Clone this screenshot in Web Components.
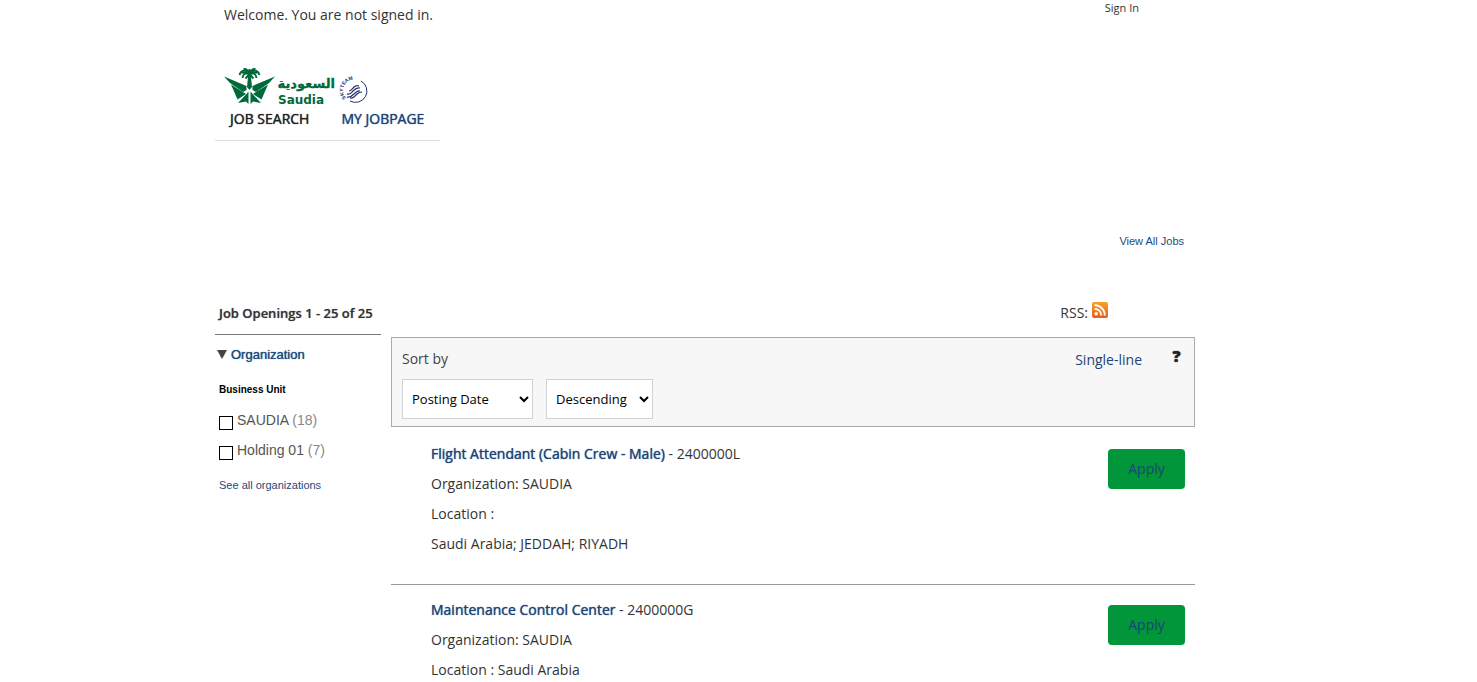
<!DOCTYPE html>
<html lang="en">
<head>
<meta charset="utf-8">
<title>Job Search</title>
<style>
body { margin: 0; background: #fff; color: #333; font: 14px/30px "Open Sans", sans-serif; overflow-x: hidden; }
</style>
</head>
<body>
<careers-page></careers-page>

<template id="t-page">
<style>
:host { display: block; padding: 0 67px 0 0; }
.wrap { max-width: 980px; margin: 0 auto; }
.bar { display: flex; justify-content: space-between; align-items: flex-start; padding: 0 56px 0 9px; }
.bar a { color: #333; text-decoration: none; font-size: 11px; line-height: 16px; }
site-logo { padding: 36px 0 0 9px; }
.all { display: flex; justify-content: flex-end; padding: 92px 11px 0 0; font: 11px/16px "Liberation Sans", sans-serif; }
.all a { color: #1b4b7c; text-decoration: none; }
.head { display: flex; justify-content: space-between; padding: 49px 87px 0 4px; }
h1 { margin: 0; font-size: 13px; line-height: 30px; font-weight: 600; text-shadow: 0 0 1px #888; }
.rss { display: flex; gap: 4px; align-items: center; line-height: 30px; }
.rss a { display: block; height: 22px; }
.rss svg { display: block; }
.cols { display: grid; grid-template-columns: 166px minmax(0, 1fr); column-gap: 10px; align-items: start; }
main { padding-top: 9px; }
</style>
<div class="wrap">
  <div class="bar"><span>Welcome. You are not signed in.</span><a href="#signin">Sign In</a></div>
  <header><site-logo></site-logo><site-tabs></site-tabs></header>
  <div class="all"><a href="#all">View All Jobs</a></div>
  <div class="head">
    <h1>Job Openings 1 - 25 of 25</h1>
    <div class="rss"><span>RSS:</span><a href="#rss" aria-label="RSS feed">
      <svg width="16" height="16" viewBox="0 0 16 16"><defs><linearGradient id="o" x2="0" y2="1"><stop stop-color="#f6a325"/><stop offset="1" stop-color="#ea5d1f"/></linearGradient></defs><rect width="16" height="16" rx="2" fill="url(#o)"/><circle cx="4.2" cy="11.8" r="1.7" fill="#fff"/><path d="M2.6 6.8a6.600 6.600 0 0 1 6.600 6.600M2.600 3.200a10.200 10.200 0 0 1 10.200 10.200" fill="none" stroke="#fff" stroke-width="1.800"/></svg></a></div>
  </div>
  <div class="cols">
    <filter-panel></filter-panel>
    <main>
      <sort-bar></sort-bar>
      <job-item code="2400000L"><span slot="title">Flight Attendant (Cabin Crew - Male)</span><div>Organization: SAUDIA</div><div>Location :</div><div>Saudi Arabia; JEDDAH; RIYADH</div></job-item>
      <job-item code="2400000G"><span slot="title">Maintenance Control Center</span><div>Organization: SAUDIA</div><div>Location : Saudi Arabia</div></job-item>
    </main>
  </div>
</div>
</template>

<template id="t-logo">
<style>:host { display: block; } svg { display: block; }</style>
<svg width="144" height="42" viewBox="0 0 144 42" role="img" aria-label="Saudia SkyTeam">
  <g fill="#00693a">
    <path d="M0 10.500 22.500 20 22.500 24 19 26 6 17Z"/>
    <path d="M51 10.500 28.500 20 28.500 24 32 26 45 17Z"/>
    <path d="M7 18.500 22 28 13.500 33.500Z"/>
    <path d="M44 18.500 29 28 37.500 33.500Z"/>
    <path d="M24.500 25.500V38L22 35.500 14 37 22 28.500Z"/>
    <path d="M26.500 25.500V38L29 35.500 37 37 29 28.500Z"/>
    <path d="M24.300 8h2.400l1.300 13-2.500 3-2.500-3Z"/>
  </g>
  <path d="M25.500 10V3M25.500 8C22 3 17 4 15.500 9M25.500 8C29 3 34 4 35.500 9M25.500 8C22 6 19 8 18.500 12M25.500 8C29 6 32 8 32.500 12M25.500 8C24 4 22 2.500 19.500 3M25.500 8C27 4 29 2.500 31.500 3M25.500 8 21.500 12.500M25.500 8l4 4.500M18 6.500l6 1M33 6.500l-6 1" fill="none" stroke="#00693a" stroke-width="1.900"/>
  <g fill="#00693a" font-weight="700">
    <text x="111" y="22" font-family="DejaVu Sans, sans-serif" font-size="13" text-anchor="end" direction="ltr" stroke="#00693a" stroke-width=".3">السعودية</text>
    <text x="54" y="38" font-family="DejaVu Sans, sans-serif" font-size="12">Saudia</text>
  </g>
  <g fill="none" stroke="#25306c">
    <path d="M126 35A10.500 10.500 0 0 0 137 15" stroke-width="1"/>
    <path d="M123 28c3 1 4-1 6-3s4-4 7-3M123 31c3 1 5-1 7-3s4-4 6-3M126 32c4 1 5-2 7-4s3-2 5-2M125 25c2 0 3-2 5-4s3-2 5-1" stroke-width="1.200"/>
    <path id="ring" d="M122 32A9.500 9.500 0 0 1 138 17" stroke="none"/>
  </g>
  <text font-family="Liberation Sans, sans-serif" font-size="5" font-weight="700" fill="#25306c"><textPath href="#ring">SKYTEAM</textPath></text>
</svg>
</template>

<template id="t-tabs">
<style>
:host { display: block; }
nav { display: flex; gap: 32px; width: fit-content; padding: 0 16px 10px 15px; border-bottom: 1px solid #ddd; line-height: 22px; }
a { color: #1d4477; text-decoration: none; text-shadow: 0 0 1px currentColor; }
a[aria-current] { color: #222; }
</style>
<nav><a href="#search" aria-current="page">JOB SEARCH</a><a href="#mine">MY JOBPAGE</a></nav>
</template>

<template id="t-filter">
<style>
:host { display: block; border-top: 1px solid #777; margin-top: 6px; font-family: "Liberation Sans", sans-serif; }
h2 { margin: 0; padding: 10px 0 0 2px; font-size: 13px; line-height: 20px; font-weight: 400; }
button { display: flex; align-items: center; gap: 4px; border: 0; background: none; padding: 0; font: inherit; color: #1b4b7c; text-shadow: 0 0 1px currentColor; }
h3 { margin: 0; padding: 17px 0 8px 4px; font-size: 10px; line-height: 16px; color: #000; }
label { display: flex; align-items: center; gap: 4px; padding: 0 0 2px 4px; height: 28px; color: #555; }
label span span { color: #888; }
input { appearance: none; width: 14px; height: 14px; margin: 6px 0 0; border: 1px solid #000; background: #fff; }
.more { display: block; padding: 11px 0 0 4px; font-size: 11px; line-height: 16px; color: #1b4b7c; text-decoration: none; }
</style>
<h2><button type="button" aria-expanded="true"><svg width="10" height="10"><path d="M0 0h10L5 9Z" fill="#444"/></svg>Organization</button></h2>
<h3>Business Unit</h3>
<label><input type="checkbox"><span>SAUDIA <span>(18)</span></span></label>
<label><input type="checkbox"><span>Holding 01 <span>(7)</span></span></label>
<a class="more" href="#orgs">See all organizations</a>
</template>

<template id="t-sort">
<style>
:host { display: flex; justify-content: space-between; border: 1px solid #aaa; background: #f7f7f7; padding: 6px 12px 7px 10px; }
label { display: block; color: #444; }
.row { display: flex; gap: 13px; padding-top: 5px; }
select { height: 40px; box-sizing: border-box; border: 1px solid #d3d3d3; border-radius: 0; background: #fff; color: #000; font: 13px "Open Sans", sans-serif; padding: 0 0 0 5px; }
#by { width: 131px; } #dir { width: 107px; }
.right { display: flex; gap: 29px; }
a { color: #1d4477; text-decoration: none; }
.right a { line-height: 32px; }
button { width: 11px; height: 24px; border: 0; background: none; padding: 0; font: 800 16px/24px "Open Sans", sans-serif; color: #222; text-shadow: 0 0 1px currentColor; }
</style>
<div><label for="by">Sort by</label><div class="row">
<select id="by"><option>Posting Date</option><option>Job Title</option></select>
<select id="dir" aria-label="Order"><option>Descending</option><option>Ascending</option></select></div></div>
<div class="right"><a href="#single">Single-line</a><button type="button" aria-label="Help">?</button></div>
</template>

<template id="t-job">
<style>
:host { display: flex; justify-content: space-between; align-items: flex-start; padding: 12px 10px 25px 40px; }
:host(:not(:last-child)) { border-bottom: 1px solid #999; }
:host(:not(:first-of-type)) { padding-top: 10px; }
.title { color: #1d4477; text-decoration: none; text-shadow: 0 0 1px currentColor; }
button { width: 77px; height: 40px; margin-top: 10px; border: 0; border-radius: 4px; background: #009639; color: #1d4477; font: 14px "Open Sans", sans-serif; padding: 0 0 2px; }
</style>
<article><div><a class="title" href="#job"><slot name="title"></slot></a> - <span class="code"></span></div><slot></slot></article>
<button type="button">Apply</button>
</template>

<script>
function define(name, id, setup) {
  customElements.define(name, class extends HTMLElement {
    constructor() {
      super();
      this.attachShadow({ mode: "open" }).append(document.getElementById(id).content.cloneNode(true));
    }
    connectedCallback() { if (setup) setup(this); }
  });
}
define("site-logo", "t-logo");
define("site-tabs", "t-tabs");
define("filter-panel", "t-filter");
define("sort-bar", "t-sort");
define("job-item", "t-job", el => { el.shadowRoot.querySelector(".code").textContent = el.getAttribute("code"); });
define("careers-page", "t-page");
</script>
</body>
</html>
